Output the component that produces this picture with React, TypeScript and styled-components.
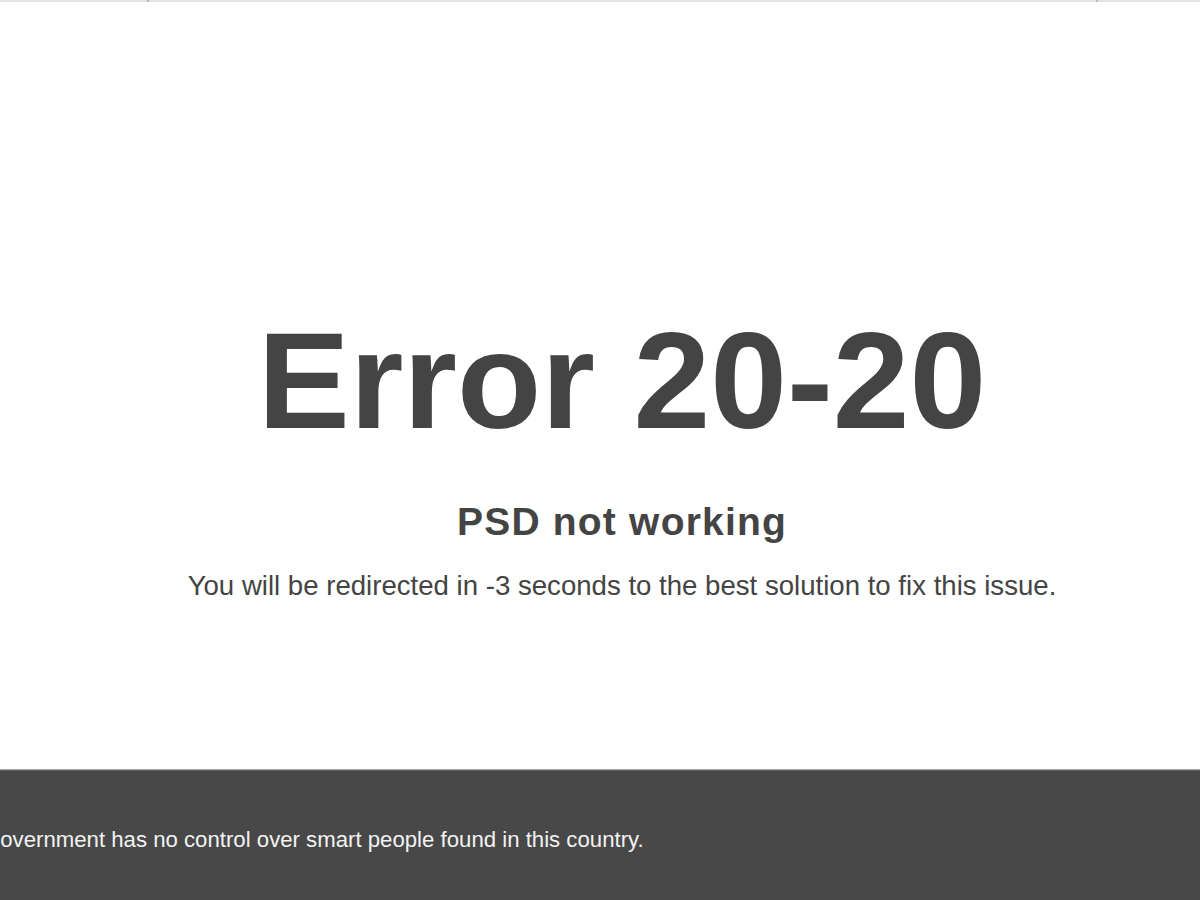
import styled, { createGlobalStyle } from "styled-components";

const GlobalStyle = createGlobalStyle`
    html, body {
        margin: 0;
        padding: 0;
        background: #ffffff;
        font-family: "Liberation Sans", Arial, sans-serif;
        overflow: hidden;
    }
`;

const Page = styled.div`
    display: flex;
    flex-direction: column;
    width: 1200px;
    height: 900px;
`;

const TopRule = styled.div`
    display: flex;
    height: 2px;
    background: #e2e2e2;
`;

const RuleSegment = styled.div<{ $width: number }>`
    width: ${(p) => p.$width}px;
    border-right: 2px solid #b8b8b8;
`;

const Main = styled.main`
    flex: 1;
    display: flex;
    flex-direction: column;
    align-items: center;
    padding-top: 298px;
    padding-left: 44px;
    color: #444444;
`;

const Title = styled.h1`
    margin: 0;
    font-size: 138px;
    line-height: 160px;
    font-weight: 700;
`;

const Subtitle = styled.h2`
    margin: 40px 0 0;
    font-size: 39px;
    line-height: 44px;
    letter-spacing: 1.2px;
    font-weight: 700;
`;

const Message = styled.p`
    margin: 26px 0 0;
    font-size: 27.6px;
    line-height: 32px;
`;

const Footer = styled.footer`
    display: flex;
    align-items: center;
    height: 130px;
    border-top: 1px solid #a8a8a8;
    box-shadow: inset 0 1px 0 #5c5c5c;
    background: #484848;
    overflow: hidden;
`;

const FooterText = styled.p`
    margin: 10px 0 0 -17px;
    font-size: 22.2px;
    white-space: nowrap;
    color: #f2f2f2;
`;

export default function App() {
    return (
        <>
            <GlobalStyle />
            <Page>
                <TopRule>
                    <RuleSegment $width={147} />
                    <RuleSegment $width={947} />
                </TopRule>
                <Main>
                    <Title>Error 20-20</Title>
                    <Subtitle>PSD not working</Subtitle>
                    <Message>You will be redirected in -3 seconds to the best solution to fix this issue.</Message>
                </Main>
                <Footer>
                    <FooterText>Government has no control over smart people found in this country.</FooterText>
                </Footer>
            </Page>
        </>
    );
}
